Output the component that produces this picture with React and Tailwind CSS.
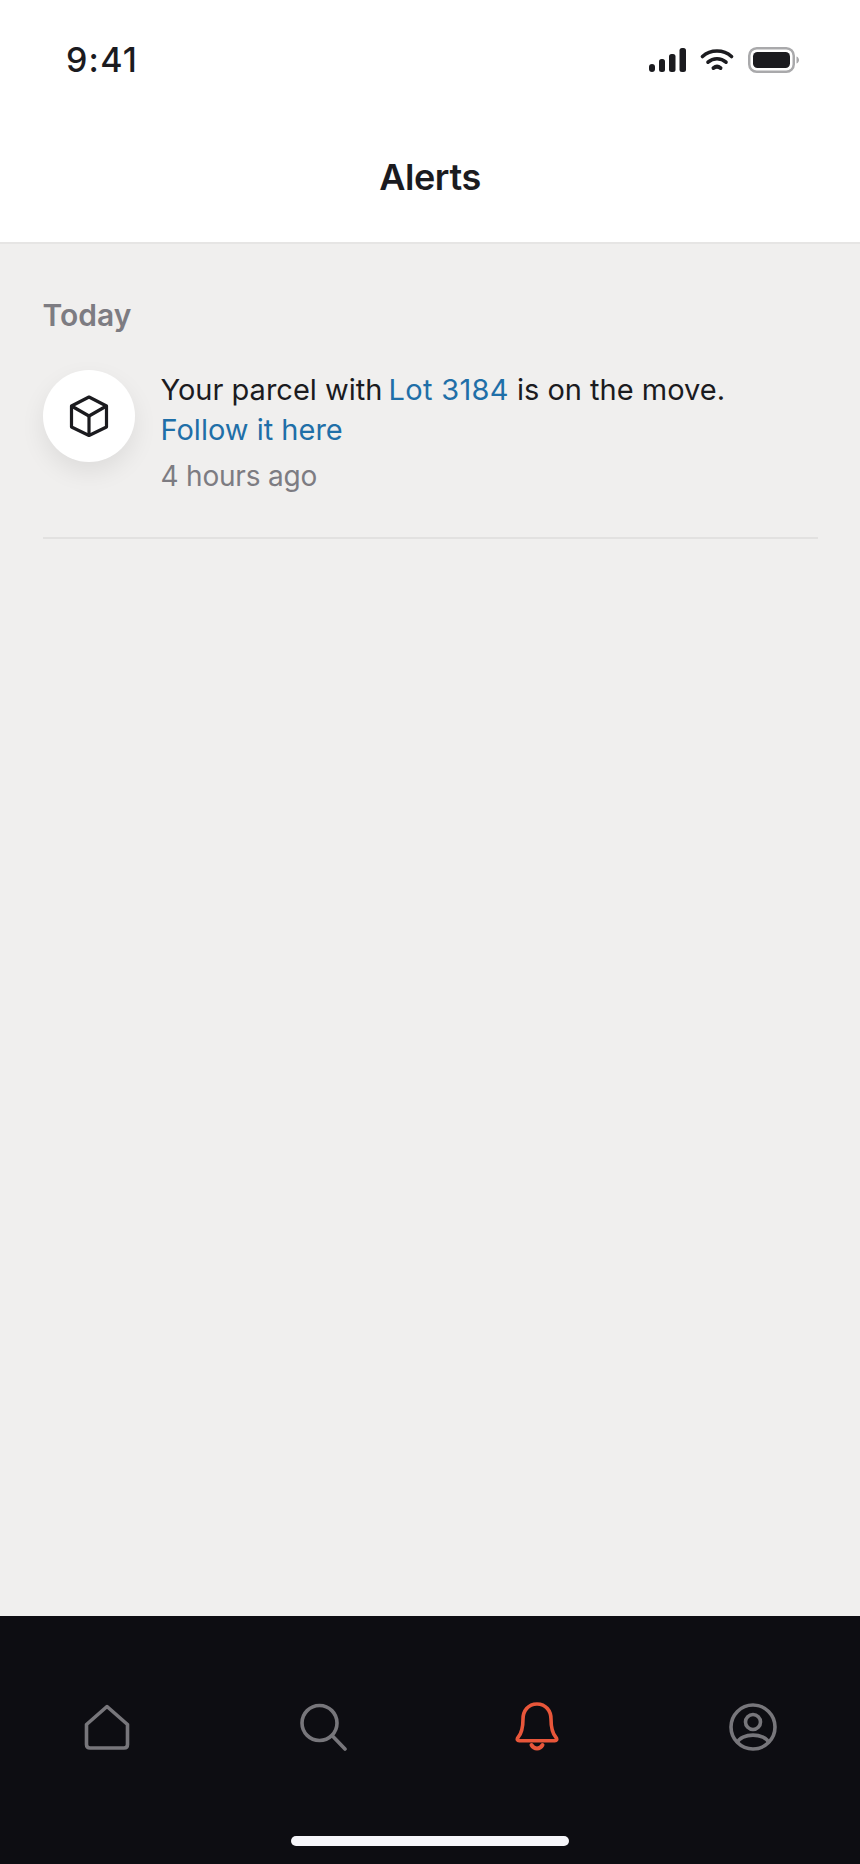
import React from 'react';

const fontStack = { fontFamily: 'Inter, "Noto Sans", sans-serif' };

const StatusIcons = () => (
    <div className="flex items-center gap-[14px]">
        <svg width="37" height="24" viewBox="0 0 37 24" fill="#1b1b1f">
            <rect x="0" y="16" width="6" height="8" rx="3" />
            <rect x="10" y="11" width="6" height="13" rx="2.5" />
            <rect x="20" y="6" width="6.5" height="18" rx="2.5" />
            <rect x="30.5" y="0" width="6.5" height="24" rx="2.5" />
        </svg>
        <svg width="34" height="24" viewBox="0 0 34 24" fill="none" stroke="#1b1b1f" strokeLinecap="round">
            <path d="M2.5 8.5C10.5 1.2 23.5 1.2 31.5 8.5" strokeWidth="3.6" />
            <path d="M8 14.2C13.2 9.6 20.8 9.6 26 14.2" strokeWidth="3.6" />
            <path d="M13.5 20C15.6 18.4 18.4 18.4 20.5 20" strokeWidth="4" />
        </svg>
        <svg width="51" height="26" viewBox="0 0 51 26" fill="none">
            <rect x="1.25" y="1.25" width="44.5" height="23.5" rx="7.5" stroke="#a9a9ab" strokeWidth="2.5" />
            <rect x="5" y="5" width="37" height="16" rx="4.5" fill="#1b1b1f" />
            <path d="M48.5 9.5C50.2 10.2 51 11.4 51 13C51 14.6 50.2 15.8 48.5 16.5Z" fill="#a9a9ab" />
        </svg>
    </div>
);

const BoxIcon = () => (
    <svg width="42" height="42" viewBox="0 0 42 42" fill="none" stroke="#1b1b1f" strokeWidth="3.2" strokeLinejoin="round">
        <path d="M21 2L38.5 11V32L21 40.5L3.5 32V11Z" />
        <path d="M3.5 11L21 21L38.5 11" />
        <path d="M21 21V40.5" />
    </svg>
);

const HomeIcon = () => (
    <svg width="46" height="46" viewBox="0 0 46 46" fill="none" stroke="#77767b" strokeWidth="3.6" strokeLinejoin="round">
        <path d="M23 2.5L43.5 20.5V40.5C43.5 42.8 42.3 44 40 44H6C3.7 44 2.5 42.8 2.5 40.5V20.5Z" />
    </svg>
);

const SearchIcon = () => (
    <svg width="48" height="48" viewBox="0 0 48 48" fill="none" stroke="#77767b" strokeWidth="3.6" strokeLinecap="round">
        <circle cx="20.5" cy="20" r="17.5" />
        <path d="M33.5 33L46 46" />
    </svg>
);

const BellIcon = () => (
    <svg width="44" height="50" viewBox="0 0 44 50" fill="none" stroke="#e8563a" strokeWidth="3.6" strokeLinecap="round" strokeLinejoin="round">
        <path d="M22 2C13 2 8 9 8 17C8 26 7 31 3 35.5C1.6 37.2 2.4 38.8 4.2 38.8H39.8C41.6 38.8 42.4 37.2 41 35.5C37 31 36 26 36 17C36 9 31 2 22 2Z" />
        <path d="M16.5 43C19 47.5 25 47.5 27.5 43" strokeWidth="4" />
    </svg>
);

const ProfileIcon = () => (
    <svg width="48" height="48" viewBox="0 0 48 48" fill="none" stroke="#77767b" strokeWidth="3.6">
        <circle cx="24" cy="24" r="22" />
        <circle cx="24" cy="19" r="7.5" />
        <path d="M8 40C12 29.5 36 29.5 40 40" />
    </svg>
);

const App = () => {
    return (
        <div className="h-[1864px] w-[860px] flex flex-col bg-[#f0efee] overflow-hidden" style={fontStack}>
            <header className="h-[244px] bg-white border-b-2 border-[#e6e5e4]">
                <div className="flex items-center justify-between pl-[66px] pr-[61px] pt-[40px] h-[80px]">
                    <span className="text-[34px] font-medium leading-[40px] tracking-[1.2px] text-[#1b1b1f]">9:41</span>
                    <StatusIcons />
                </div>
                <h1 className="mt-[76px] text-center text-[36px] font-semibold leading-[42px] tracking-[-0.4px] text-[#1b1b1f]">Alerts</h1>
            </header>

            <main className="flex-1 pl-[42.5px] pr-[42px] pt-[52px]">
                <h2 className="text-[30px] font-semibold leading-[38px] text-[#7d7c82]">Today</h2>
                <div className="mt-[36px] flex gap-[26px] border-b-2 border-[#e2e1e0] pb-[41px]">
                    <div className="h-[92px] w-[92px] shrink-0 rounded-full bg-white flex items-center justify-center shadow-[0_10px_24px_rgba(0,0,0,0.08)]">
                        <BoxIcon />
                    </div>
                    <div className="text-[29px] leading-[39px] text-[#1b1b1f]">
                        <p>Your parcel with <span className="-ml-[2px] tracking-[0.3px] text-[#1f6fa8]">Lot 3184</span> is on the move.</p>
                        <p className="mt-[1px] text-[#1f6fa8]">Follow it here</p>
                        <p className="mt-[8px] text-[28px] tracking-[-0.2px] text-[#7d7c82]">4 hours ago</p>
                    </div>
                </div>
            </main>

            <nav className="h-[248px] bg-[#0d0d12] flex flex-col">
                <div className="grid grid-cols-4 pt-[86px]">
                    <div className="flex h-[50px] items-center justify-center -translate-x-px"><HomeIcon /></div>
                    <div className="flex h-[50px] items-center justify-center"><SearchIcon /></div>
                    <div className="flex h-[50px] items-center justify-center -translate-x-px"><BellIcon /></div>
                    <div className="flex h-[50px] items-center justify-center"><ProfileIcon /></div>
                </div>
                <div className="mt-[84px] mx-auto h-[10px] w-[278px] rounded-full bg-[#f6f6fa]"></div>
            </nav>
        </div>
    );
};

export default App;
